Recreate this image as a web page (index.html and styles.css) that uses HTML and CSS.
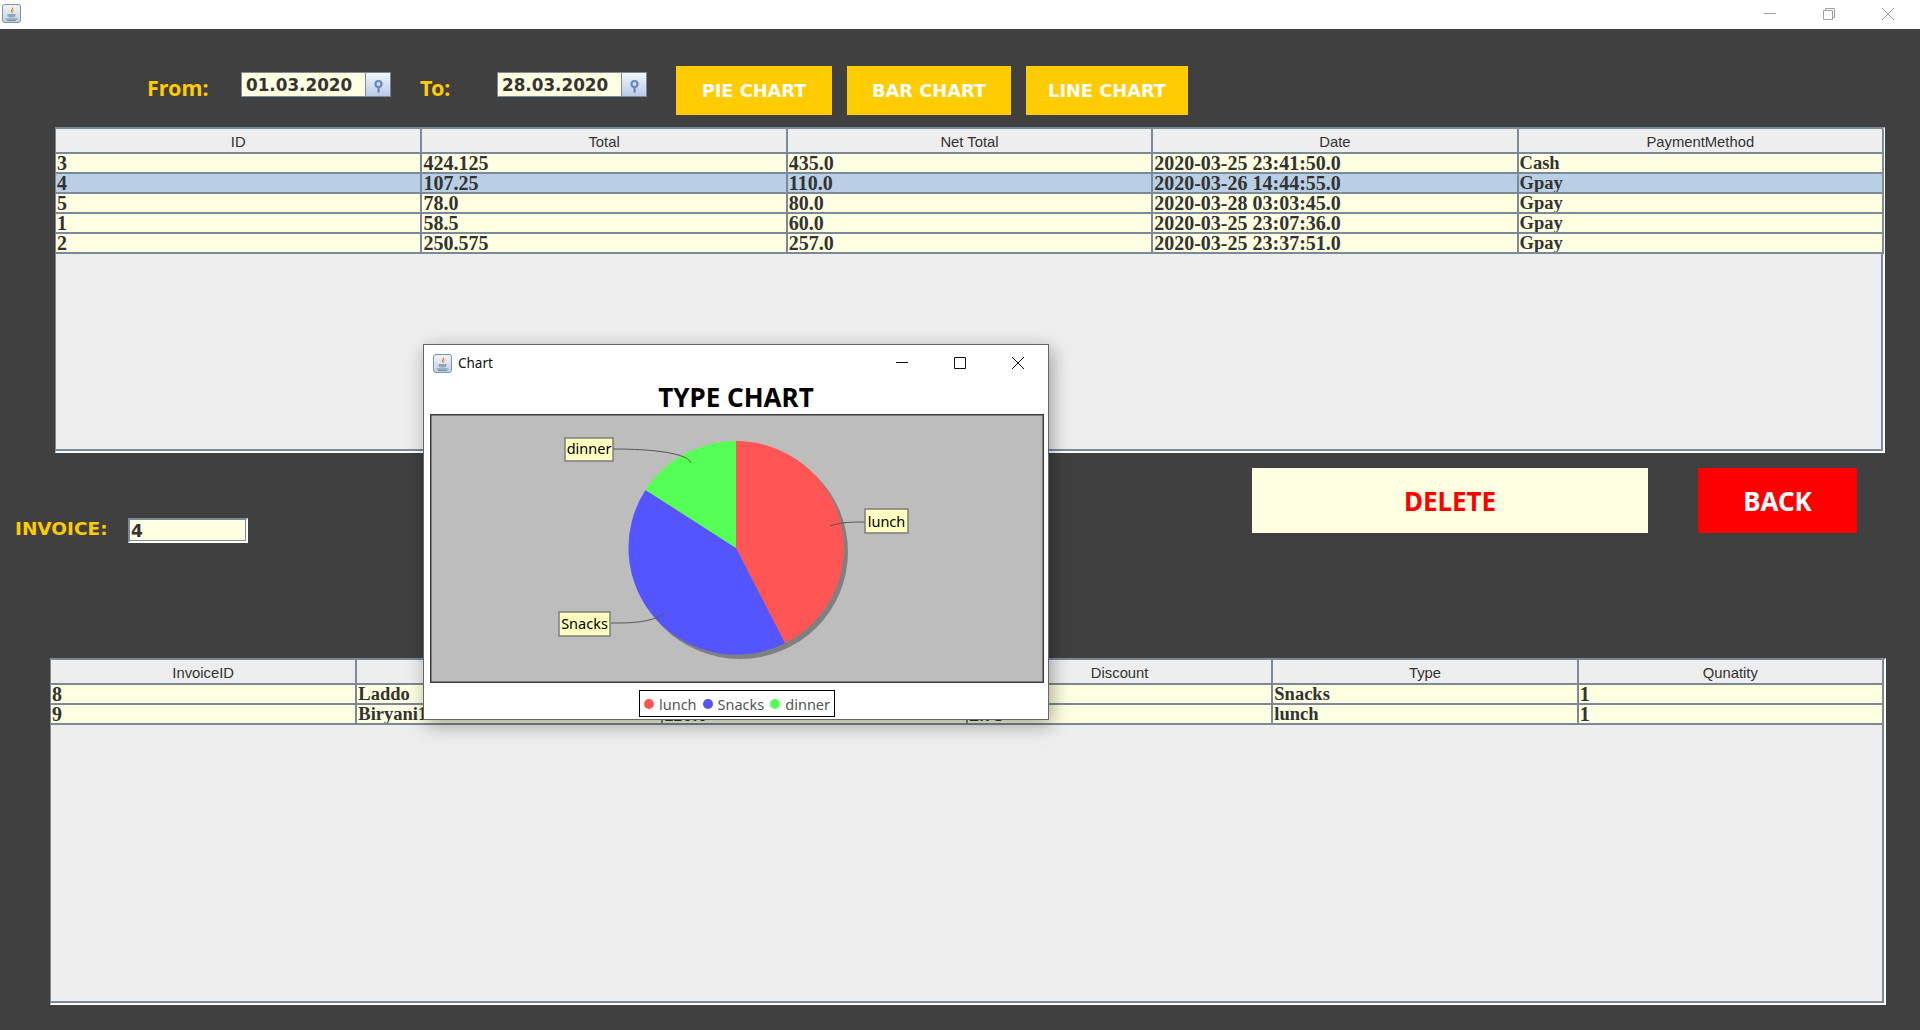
FILE: index.html
```html
<!DOCTYPE html>
<html lang="en">
<head>
    <meta charset="UTF-8">
    <title>Sales report</title>
    <link rel="stylesheet" href="styles.css">
</head>
<body>
    <svg class="defs" width="0" height="0">
        <defs>
            <linearGradient id="iconBg" x1="0" y1="0" x2="0" y2="1">
                <stop offset="0" stop-color="#f2f5f8"/>
                <stop offset="1" stop-color="#c5d1dd"/>
            </linearGradient>
            <symbol id="javaIcon" viewBox="0 0 19 19">
                <rect x="0.5" y="0.5" width="18" height="18" rx="2.5" fill="url(#iconBg)" stroke="#7b92a8"/>
                <path d="M10 3c1 2-2 3-1 5 .3.8 1 1 1 1-1.500-1 2-3 .8-5.500z" fill="#e8772e"/>
                <path d="M12 5.500c-1 1-2 1.500-1.300 3.500" fill="none" stroke="#f0a060"/>
                <path d="M5.500 10h8v1.500c0 1.500-1.500 2-4 2s-4-.5-4-2z" fill="#8ea6bc"/>
                <path d="M3.500 15h12M5 16.500h9" stroke="#6f8aa3" fill="none"/>
            </symbol>
            <symbol id="keyIcon" viewBox="0 0 25 24">
                <circle cx="12.500" cy="10" r="3" fill="none" stroke="#6a85c0" stroke-width="2.200"/>
                <rect x="11.500" y="12" width="2.200" height="6.500" fill="#6a85c0"/>
            </symbol>
        </defs>
    </svg>

    <header class="titlebar">
        <svg class="app-icon" width="19" height="19"><use href="#javaIcon"/></svg>
        <div class="win-controls">
            <svg width="14" height="14" viewBox="0 0 14 14"><path d="M1 6.500h12" stroke="#a0a0a0" fill="none"/></svg>
            <svg width="14" height="14" viewBox="0 0 14 14"><path d="M1.500 3.500h9v9h-9zM3.500 3.500v-2h9v9h-2" stroke="#a0a0a0" fill="none"/></svg>
            <svg width="14" height="14" viewBox="0 0 14 14"><path d="M1 1l12 12M13 1L1 13" stroke="#a0a0a0" fill="none"/></svg>
        </div>
    </header>

    <main class="app">
        <section class="filters">
            <span class="range-label from-label">From:</span>
            <div class="date-field">
                <span class="date-value">01.03.2020</span>
                <span class="date-btn"><svg width="25" height="24"><use href="#keyIcon"/></svg></span>
            </div>
            <span class="range-label to-label">To:</span>
            <div class="date-field">
                <span class="date-value">28.03.2020</span>
                <span class="date-btn"><svg width="25" height="24"><use href="#keyIcon"/></svg></span>
            </div>
            <button class="chart-btn pie-btn">PIE CHART</button>
            <button class="chart-btn bar-btn">BAR CHART</button>
            <button class="chart-btn line-btn">LINE CHART</button>
        </section>

        <section class="table-panel invoices-panel">
            <table class="data-table">
                <thead>
                    <tr><th>ID</th><th>Total</th><th>Net Total</th><th>Date</th><th>PaymentMethod</th></tr>
                </thead>
                <tbody>
                    <tr><td class="num">3</td><td class="num">424.125</td><td class="num">435.0</td><td class="num">2020-03-25 23:41:50.0</td><td>Cash</td></tr>
                    <tr class="selected"><td class="num">4</td><td class="num">107.25</td><td class="num">110.0</td><td class="num">2020-03-26 14:44:55.0</td><td>Gpay</td></tr>
                    <tr><td class="num">5</td><td class="num">78.0</td><td class="num">80.0</td><td class="num">2020-03-28 03:03:45.0</td><td>Gpay</td></tr>
                    <tr><td class="num">1</td><td class="num">58.5</td><td class="num">60.0</td><td class="num">2020-03-25 23:07:36.0</td><td>Gpay</td></tr>
                    <tr><td class="num">2</td><td class="num">250.575</td><td class="num">257.0</td><td class="num">2020-03-25 23:37:51.0</td><td>Gpay</td></tr>
                </tbody>
            </table>
        </section>

        <section class="actions">
            <div class="invoice-box">
                <span class="invoice-label">INVOICE:</span>
                <div class="invoice-input">4</div>
            </div>
            <button class="delete-btn">DELETE</button>
            <button class="back-btn">BACK</button>
        </section>

        <section class="table-panel items-panel">
            <table class="data-table">
                <thead>
                    <tr><th>InvoiceID</th><th>Name</th><th>Price</th><th>Discount</th><th>Type</th><th>Qunatity</th></tr>
                </thead>
                <tbody>
                    <tr><td class="num">8</td><td>Laddo</td><td class="num">60.0</td><td class="num">1.5</td><td>Snacks</td><td class="num">1</td></tr>
                    <tr><td class="num">9</td><td>Biryani1</td><td class="num">110.0</td><td class="num">2.75</td><td>lunch</td><td class="num">1</td></tr>
                </tbody>
            </table>
        </section>
    </main>

    <div class="chart-window">
        <div class="chart-titlebar">
            <svg class="chart-icon" width="19" height="19"><use href="#javaIcon"/></svg>
            <span class="chart-name">Chart</span>
            <div class="chart-controls">
                <svg width="14" height="14" viewBox="0 0 14 14"><path d="M1 6.500h12" stroke="#111" fill="none"/></svg>
                <svg width="14" height="14" viewBox="0 0 14 14"><path d="M1.500 1.500h11v11h-11z" stroke="#111" fill="none"/></svg>
                <svg width="14" height="14" viewBox="0 0 14 14"><path d="M1 1l12 12M13 1L1 13" stroke="#111" fill="none"/></svg>
            </div>
        </div>
        <h2 class="chart-heading">TYPE CHART</h2>
        <svg class="plot" width="614" height="269" viewBox="0 0 614 269">
            <rect x="0.750" y="0.750" width="612.500" height="267.500" fill="#bdbdbd" stroke="#3c3c3c" stroke-width="1.500"/>
            <ellipse cx="310" cy="138" rx="108" ry="107" fill="#808080"/>
            <path d="M306 134V27A108 107 0 0 1 355 229.300z" fill="#ff5555"/>
            <path d="M306 134L355 229.300A108 107 0 0 1 215.500 76z" fill="#5555ff"/>
            <path d="M306 134L215.500 76A108 107 0 0 1 306 27z" fill="#55ff55"/>
            <g class="leader">
                <path d="M183 35c28 0 60 2 73 9 2 1 4 3 5 5"/>
                <path d="M435 108c-12 0-24 0-35 4"/>
                <path d="M181 209c20 0 40 0 54-10"/>
            </g>
            <g class="tag">
                <rect x="135" y="24" width="48" height="23"/>
                <text x="159" y="40">dinner</text>
                <rect x="435" y="95" width="43" height="24"/>
                <text x="456.500" y="113">lunch</text>
                <rect x="129" y="198" width="51" height="24"/>
                <text x="154.500" y="215">Snacks</text>
            </g>
        </svg>
        <div class="legend">
            <span class="legend-item"><i class="dot dot-red"></i>lunch</span>
            <span class="legend-item"><i class="dot dot-blue"></i>Snacks</span>
            <span class="legend-item"><i class="dot dot-green"></i>dinner</span>
        </div>
    </div>
</body>
</html>
```

FILE: styles.css
```css
* {
    box-sizing: border-box;
}

html, body {
    margin: 0;
    height: 1030px;
    overflow: hidden;
}

body {
    background-color: #404040;
    font-family: "Liberation Sans", Arial, sans-serif;
    color: #333333;
}

.defs {
    display: block;
    height: 0;
}

button {
    border: none;
    padding: 0;
    cursor: pointer;
}

/* main window title bar */
.titlebar {
    height: 29px;
    background-color: #ffffff;
    display: flex;
    align-items: center;
    justify-content: space-between;
    padding-left: 2px;
    padding-bottom: 2px;
}

.app-icon {
    display: block;
}

.win-controls {
    display: flex;
    gap: 45px;
    padding-right: 25px;
}

.win-controls svg {
    display: block;
}

/* filters row */
.filters {
    height: 98px;
    display: flex;
    align-items: flex-start;
    padding-left: 147px;
}

.range-label {
    font-family: "Noto Sans", sans-serif;
    font-weight: 700;
    font-size: 21.500px;
    line-height: 28px;
    color: #ffcc00;
    margin-top: 45px;
}

.from-label {
    width: 94px;
}

.to-label {
    width: 77px;
    margin-left: 29px;
}

.date-field {
    width: 150px;
    height: 25px;
    margin-top: 43px;
    display: flex;
    border: 1px solid #7a8a99;
    background-color: #ffffe1;
}

.date-value {
    flex: 1;
    font-family: "DejaVu Sans", sans-serif;
    font-weight: 700;
    font-size: 16.800px;
    line-height: 25px;
    padding-left: 4px;
}

.date-btn {
    width: 25px;
    border-left: 1px solid #7a8a99;
    background: linear-gradient(#f3f6fb, #b9cbe6);
}

.date-btn svg {
    display: block;
    margin-top: 1px;
}

.chart-btn {
    height: 49px;
    margin-top: 37px;
    background-color: #ffcc00;
    color: #ffffff;
    font-family: "DejaVu Sans", sans-serif;
    font-weight: 700;
    font-size: 17.800px;
}

.pie-btn {
    width: 156px;
    margin-left: 29px;
}

.bar-btn {
    width: 164px;
    margin-left: 15px;
}

.line-btn {
    width: 162px;
    margin-left: 15px;
}

/* tables */
.table-panel {
    background-color: #eeeeee;
    border-top: 2px solid #7a8a99;
    border-left: 1px solid #7a8a99;
    border-right: 2px solid #ffffff;
    border-bottom: 2px solid #ffffff;
    box-shadow: inset -2px -2px 0 #7a8a99;
}

.invoices-panel {
    width: 1830px;
    height: 326px;
    margin-left: 55px;
}

.items-panel {
    width: 1836px;
    height: 347px;
    margin-left: 50px;
}

.data-table {
    width: 1828px;
    table-layout: fixed;
    border-collapse: collapse;
}

.items-panel .data-table {
    width: 1833px;
}

.data-table th {
    height: 24px;
    padding: 2px 0 0;
    font-weight: 400;
    font-size: 14.800px;
    background-color: #eeeeee;
    border-right: 2px solid #7a8a99;
    border-bottom: 2px solid #7a8a99;
}

.data-table td {
    height: 20px;
    padding: 0 0 0 1px;
    font-family: "Liberation Serif", serif;
    font-weight: 700;
    font-size: 18.500px;
    line-height: 18px;
    background-color: #ffffe1;
    border-right: 2px solid #7a8a99;
    border-bottom: 2px solid #7a8a99;
    overflow: hidden;
    white-space: nowrap;
}

.data-table td.num {
    font-size: 20px;
}

.data-table .selected td {
    background-color: #b8cfe5;
}

/* invoice field and big buttons */
.actions {
    height: 205px;
    display: flex;
    align-items: flex-start;
}

.invoice-box {
    display: flex;
    align-items: flex-start;
    margin-top: 65px;
    margin-left: 15px;
    width: 1237px;
}

.invoice-label {
    font-family: "DejaVu Sans", sans-serif;
    font-weight: 700;
    font-size: 18.500px;
    line-height: 22px;
    color: #ffcc00;
    width: 113px;
}

.invoice-input {
    width: 120px;
    height: 25px;
    background-color: #ffffe1;
    border-top: 2px solid #7a8a99;
    border-left: 2px solid #7a8a99;
    border-right: 2px solid #ffffff;
    border-bottom: 2px solid #ffffff;
    box-shadow: inset -1px -1px 0 #7a8a99;
    font-family: "DejaVu Sans", sans-serif;
    font-weight: 700;
    font-size: 17px;
    line-height: 22px;
    padding-left: 1px;
}

.delete-btn,
.back-btn {
    height: 65px;
    margin-top: 15px;
    font-family: "Noto Sans", sans-serif;
    font-weight: 700;
    font-size: 26px;
}

.delete-btn {
    width: 396px;
    background-color: #ffffe1;
    color: #ff0000;
}

.back-btn {
    width: 159px;
    margin-left: 50px;
    background-color: #ff0000;
    color: #ffffff;
}

/* floating chart window */
.chart-window {
    position: absolute;
    left: 423px;
    top: 344px;
    width: 626px;
    height: 376px;
    background-color: #ffffff;
    border: 1px solid #666666;
    box-shadow: 3px 5px 18px rgba(0, 0, 0, 0.35);
}

.chart-titlebar {
    height: 36px;
    display: flex;
    align-items: center;
    padding-left: 9px;
}

.chart-icon {
    display: block;
}

.chart-name {
    font-family: "Noto Sans", sans-serif;
    font-size: 13.500px;
    color: #111111;
    margin-left: 6px;
}

.chart-controls {
    display: flex;
    gap: 44px;
    margin-left: auto;
    padding-right: 23px;
}

.chart-controls svg {
    display: block;
}

.chart-heading {
    margin: 0;
    height: 33px;
    font-family: "Noto Sans", sans-serif;
    font-weight: 700;
    font-size: 26px;
    line-height: 33px;
    text-align: center;
    color: #000000;
}

.plot {
    display: block;
    margin-left: 6px;
}

.leader path {
    fill: none;
    stroke: #555555;
    stroke-width: 1;
}

.tag rect {
    fill: #ffffc0;
    stroke: #7d7d7d;
    stroke-width: 1.500;
}

.tag text {
    font-family: "Noto Sans", sans-serif;
    font-size: 14.500px;
    text-anchor: middle;
    fill: #000000;
}

.legend {
    width: 196px;
    height: 27px;
    margin: 7px 0 0 215px;
    border: 1px solid #000000;
    display: flex;
    align-items: center;
    justify-content: center;
    gap: 6px;
    font-family: "Noto Sans", sans-serif;
    font-size: 14.500px;
    color: #555555;
}

.legend-item {
    display: flex;
    align-items: center;
    gap: 5px;
}

.dot {
    width: 10px;
    height: 10px;
    border-radius: 50%;
}

.dot-red {
    background-color: #ff5555;
}

.dot-blue {
    background-color: #5555ff;
}

.dot-green {
    background-color: #55ff55;
}
```
